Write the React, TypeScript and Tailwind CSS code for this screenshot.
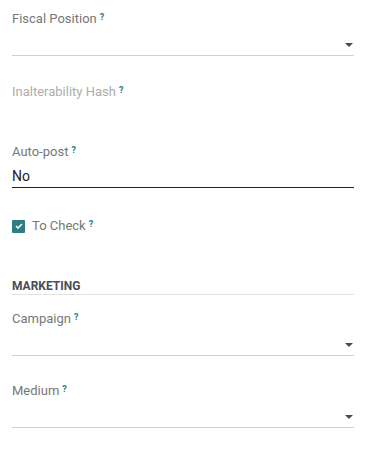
import { ReactNode } from 'react'

function Help() {
  return (
    <sup className="relative -top-[2px] ml-[3px] text-[9px] font-bold text-[#1c7f84]">?</sup>
  )
}

function Label({ children, muted }: { children: ReactNode; muted?: boolean }) {
  return (
    <div className={`flex h-5 items-center text-[13px] ${muted ? 'text-[#adadad]' : 'text-[#777]'}`}>
      <span>{children}</span>
      <Help />
    </div>
  )
}

function Caret() {
  return (
    <svg width="8" height="4" viewBox="0 0 8 4" className="shrink-0">
      <path d="M0 0h8L4 4z" fill="#4a4a4a" />
    </svg>
  )
}

function SelectField({ label }: { label: string }) {
  return (
    <div>
      <Label>{label}</Label>
      <div className="flex h-[27px] items-center justify-end border-b border-[#cfcfcf] pr-[1px] pt-[5px]">
        <Caret />
      </div>
    </div>
  )
}

export default function App() {
  return (
    <div
      className="flex min-h-[451px] w-[369px] flex-col bg-white pl-3 pr-[15px] pt-[9px]"
      style={{ fontFamily: 'Roboto, "Noto Sans", sans-serif' }}
    >
      <SelectField label="Fiscal Position" />

      <div className="mt-[26px]">
        <Label muted>Inalterability Hash</Label>
      </div>

      <div className="mt-[40px]">
        <Label>Auto-post</Label>
        <div className="flex h-[26px] items-center border-b border-[#222] pt-[3px] text-[14px] text-[#222]">
          No
        </div>
      </div>

      <label className="mt-[28px] flex h-5 items-center gap-[7px]">
        <span className="flex h-[13px] w-[13px] items-center justify-center rounded-[1px] bg-[#2e7d80]">
          <svg width="8" height="6" viewBox="0 0 8 6">
            <path d="M1 3l2 2 4-4" fill="none" stroke="#fff" strokeWidth="1.5" />
          </svg>
        </span>
        <span className="flex items-center text-[13px] text-[#777]">
          To Check
          <Help />
        </span>
      </label>

      <div className="mt-[43px] border-b border-[#e3e3e3] pb-[1px] text-[12px] font-bold leading-[14px] text-[#4a4d55]">
        MARKETING
      </div>

      <div className="mt-[14px]">
        <SelectField label="Campaign" />
      </div>

      <div className="mt-[25px]">
        <SelectField label="Medium" />
      </div>
    </div>
  )
}
